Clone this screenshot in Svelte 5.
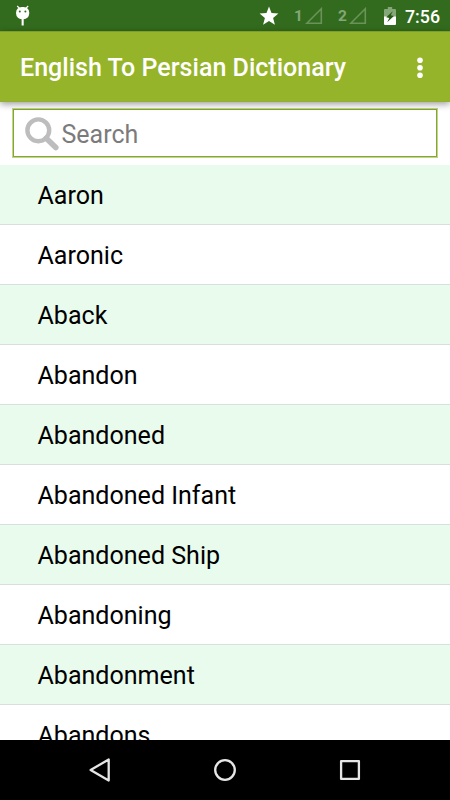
<script>
  const words = [
    'Aaron', 'Aaronic', 'Aback', 'Abandon', 'Abandoned',
    'Abandoned Infant', 'Abandoned Ship', 'Abandoning', 'Abandonment', 'Abandons'
  ];
</script>

<div class="screen">
  <div class="status">
    <svg class="bug" width="16" height="22" viewBox="0 0 16 22">
      <path d="M2.2 1 L4.6 3.4 M13.2 1 L10.8 3.4" stroke="#fff" stroke-width="1.2" fill="none" />
      <rect x="1.1" y="1.9" width="13.1" height="12.3" rx="5.6" fill="#fff" />
      <path d="M7.65 14 V20.5" stroke="#fff" stroke-width="2.1" />
      <circle cx="4.8" cy="6.5" r="1" fill="#336b1e" />
      <circle cx="10.4" cy="6.5" r="1" fill="#336b1e" />
    </svg>
    <div class="right">
      <svg class="star" width="20" height="20" viewBox="0 0 20 20">
        <path fill="#fff" d="M10 .4 12.5 7 19.4 7.5 14.1 11.9 15.9 18.8 10 15 4.1 18.8 5.9 11.9 .6 7.5 7.5 7Z" />
      </svg>
      <span class="sim">1</span>
      <svg class="signal" width="18" height="18" viewBox="0 0 18 18">
        <path d="M16.3 1.8V16.3H1.8Z" />
      </svg>
      <span class="sim">2</span>
      <svg class="signal" width="18" height="18" viewBox="0 0 18 18">
        <path d="M16.3 1.8V16.3H1.8Z" />
      </svg>
      <svg class="battery" width="12" height="19" viewBox="0 0 12 19">
        <path fill="#84a678" d="M3.8 0H8.2V2H11Q12 2 12 3V10H0V3Q0 2 1 2H3.8Z" />
        <path fill="#fff" d="M0 9.5H12V17Q12 18 11 18H1Q0 18 0 17Z" />
        <path fill="#255a12" d="M8.8 4.2 2.2 10.3 5.3 11 3.2 15.2 9.9 9 6.8 8.3Z" />
      </svg>
      <span class="time">7:56</span>
    </div>
  </div>

  <header>
    <h1>English To Persian Dictionary</h1>
    <svg class="more" width="8" height="22" viewBox="0 0 8 22">
      <circle cx="4" cy="3.3" r="2.8" />
      <circle cx="4" cy="10.8" r="2.8" />
      <circle cx="4" cy="18.3" r="2.8" />
    </svg>
  </header>

  <main>
    <div class="search">
      <svg width="36" height="36" viewBox="0 0 36 36" fill="none" stroke="#bdbdbd">
        <circle cx="14.3" cy="14.3" r="10.9" stroke-width="4.4" />
        <path d="M22.2 22.2 L31.8 31.6" stroke-width="5.6" stroke-linecap="round" />
      </svg>
      <span>Search</span>
    </div>
    <ul>
      {#each words as word}
        <li>{word}</li>
      {/each}
    </ul>
  </main>

  <nav>
    <svg width="24" height="26" viewBox="0 0 24 26"><path d="M20.7 2.5V23.5L2.6 13Z" /></svg>
    <svg width="24" height="26" viewBox="0 0 24 26"><circle cx="12" cy="13" r="9.8" /></svg>
    <svg width="24" height="26" viewBox="0 0 24 26"><rect x="3.1" y="4.1" width="17.8" height="17.8" /></svg>
  </nav>
</div>

<style>
  .screen {
    width: 450px;
    height: 800px;
    display: flex;
    flex-direction: column;
    overflow: hidden;
    background: #fff;
    font-family: Roboto, 'Liberation Sans', sans-serif;
  }
  .status {
    flex: none;
    height: 31px;
    display: flex;
    justify-content: space-between;
    align-items: flex-start;
    background: #336b1e;
    color: #fff;
  }
  .bug {
    margin: 5px 0 0 15px;
  }
  .right {
    display: flex;
    height: 32px;
    align-items: center;
    padding-right: 10px;
  }
  .sim {
    width: 11px;
    margin-left: 15px;
    font-size: 15.5px;
    font-weight: 700;
    color: #84a678;
  }
  .signal {
    fill: none;
    stroke: #6b9259;
    stroke-width: 1.6;
  }
  .battery {
    margin-left: 17px;
  }
  .time {
    width: 35px;
    margin-left: 9px;
    font-size: 17.8px;
    font-weight: 500;
    white-space: nowrap;
  }
  header {
    flex: none;
    height: 71px;
    box-sizing: border-box;
    padding: 2px 26px 0 20px;
    display: flex;
    align-items: center;
    justify-content: space-between;
    background: #96b429;
    border-top: 1px solid #7b9f27;
    border-bottom: 1px solid #93ae35;
    color: #fff;
    box-shadow: 0 2px 7px rgba(0, 0, 0, 0.4);
    z-index: 1;
  }
  h1 {
    margin: 0;
    font-size: 25.05px;
    font-weight: 500;
    line-height: 30px;
    white-space: nowrap;
  }
  .more {
    fill: #fff;
  }
  main {
    flex: 1;
    min-height: 0;
    overflow: hidden;
    padding-top: 6px;
  }
  .search {
    height: 50px;
    box-sizing: border-box;
    margin: 0 12px 7px;
    padding: 1px 0 0 10px;
    display: flex;
    align-items: center;
    border: 1px solid #c3d09f;
    box-shadow: inset 0 0 0 1px #84ab1b;
    font-size: 25px;
    color: #7b7b7b;
  }
  .search svg {
    margin-left: 1px;
  }
  .search span {
    margin: 2px 0 0 1.5px;
  }
  ul {
    margin: 0;
    padding: 0;
    list-style: none;
  }
  li {
    height: 60px;
    box-sizing: border-box;
    padding: 1px 37.5px 0;
    border-bottom: 1px solid #dadfdb;
    font-size: 25.05px;
    line-height: 60px;
    color: #000;
  }
  li:nth-child(odd) {
    background: #e8fbec;
  }
  nav {
    flex: none;
    height: 60px;
    display: flex;
    align-items: center;
    justify-content: center;
    gap: 101px;
    background: #000;
  }
  nav svg {
    fill: none;
    stroke: #e6e6e6;
    stroke-width: 2.3;
    stroke-linejoin: round;
  }
</style>
